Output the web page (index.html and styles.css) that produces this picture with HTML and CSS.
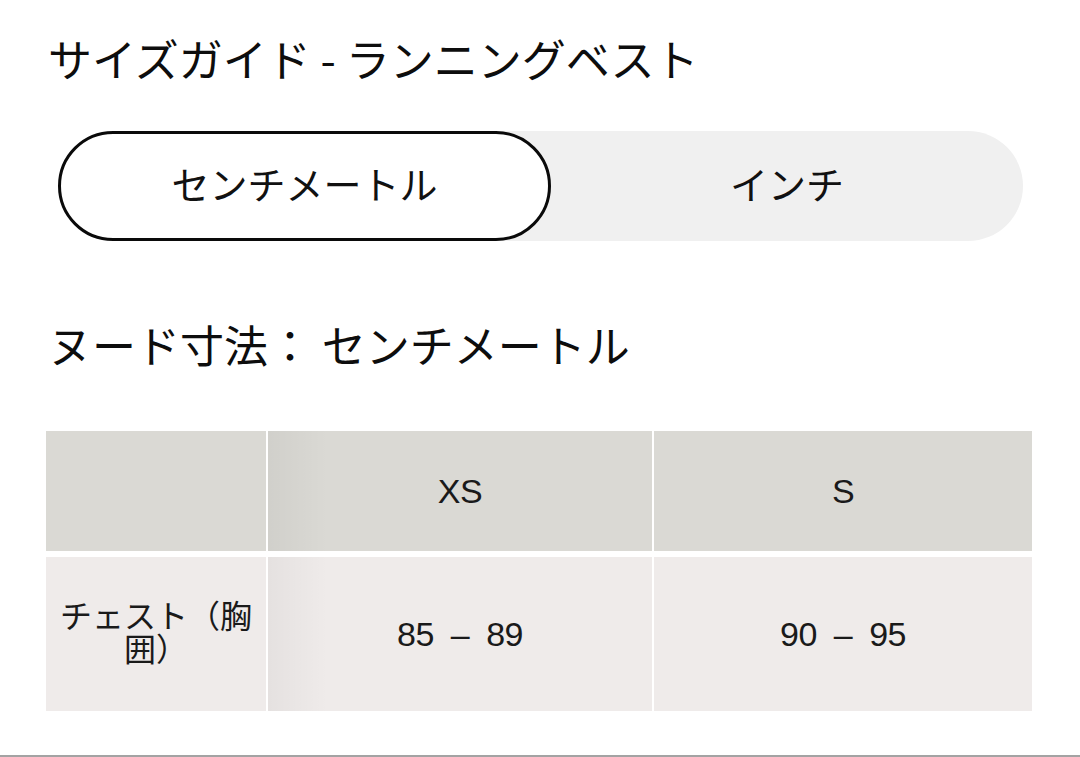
FILE: index.html
```html
<!DOCTYPE html>
<html lang="ja">
<head>
<meta charset="utf-8">
<title>サイズガイド</title>
<link rel="stylesheet" href="styles.css">
</head>
<body>
<div class="page">
  <h1 class="title">サイズガイド - ランニングベスト</h1>
  <div class="toggle">
    <button class="toggle-btn active">センチメートル</button>
    <button class="toggle-btn">インチ</button>
  </div>
  <h2 class="subtitle">ヌード寸法： センチメートル</h2>
  <div class="table">
    <div class="cell head first"></div>
    <div class="cell head shade">XS</div>
    <div class="cell head">S</div>
    <div class="cell body first label">チェスト（胸囲）</div>
    <div class="cell body shade range">85 – 89</div>
    <div class="cell body range">90 – 95</div>
  </div>
</div>
</body>
</html>
```

FILE: styles.css
```css
html, body {
  margin: 0;
  padding: 0;
  background: #fff;
}

body {
  font-family: "Noto Sans CJK JP", "Noto Sans", sans-serif;
  color: #111;
}

.page {
  height: 757px;
  box-sizing: border-box;
  border-bottom: 2px solid #a3a3a3;
  padding-top: 28px;
  overflow: hidden;
}

.title {
  margin: 0 0 0 48px;
  font-size: 44px;
  font-weight: 400;
  line-height: 60px;
  color: #0d0d0d;
}

.toggle {
  margin: 43px 0 0 58px;
  width: 965px;
  height: 110px;
  border-radius: 55px;
  background: #f0f0f0;
  display: flex;
}

.toggle-btn {
  flex: 1 1 0;
  height: 110px;
  box-sizing: border-box;
  border: 3px solid transparent;
  border-radius: 55px;
  background: transparent;
  font-family: "Noto Sans CJK JP", sans-serif;
  font-size: 38px;
  color: #111;
  padding: 0 0 8px;
  margin: 0;
}

.toggle-btn.active {
  flex: 0 0 493px;
  background: #fff;
  border-color: #0a0a0a;
}

.subtitle {
  margin: 73px 0 0 48px;
  font-size: 44px;
  font-weight: 400;
  line-height: 60px;
  color: #0d0d0d;
}

.table {
  margin: 57px 0 0 46px;
  width: 986px;
  display: grid;
  grid-template-columns: 220px 384px 378px;
  grid-template-rows: 120px 154px;
  column-gap: 2px;
  row-gap: 6px;
}

.cell {
  display: flex;
  align-items: center;
  justify-content: center;
  text-align: center;
  font-family: "Liberation Sans", "Noto Sans CJK JP", sans-serif;
  font-size: 34px;
  color: #1a1a1a;
  letter-spacing: -0.5px;
}

.cell.range {
  word-spacing: 8px;
}

.cell.head {
  background-color: #dad9d4;
}

.cell.body {
  background-color: #efebea;
}

.cell.shade {
  background-image: linear-gradient(to right, rgba(0, 0, 0, 0.045), rgba(0, 0, 0, 0) 60px);
}

.cell.label {
  font-family: "Noto Sans CJK JP", sans-serif;
  font-size: 32px;
  line-height: 33px;
  letter-spacing: 0;
  padding: 0 6px 6px;
}
```
